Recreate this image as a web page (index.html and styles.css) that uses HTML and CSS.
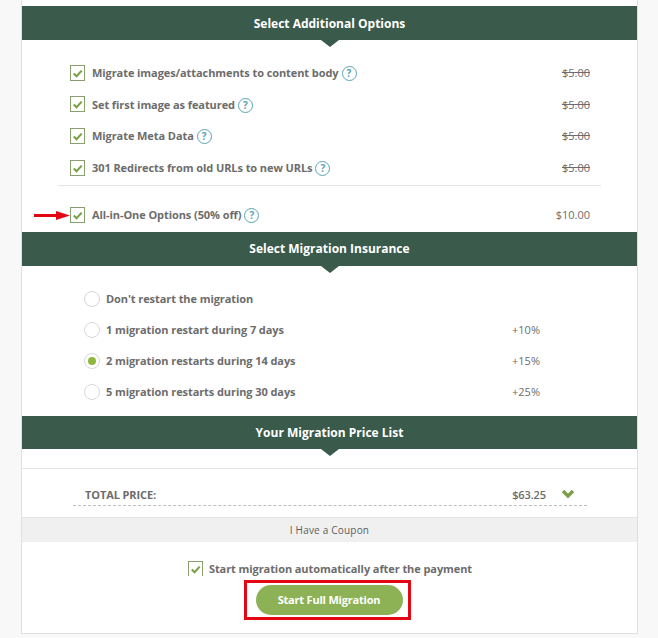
FILE: index.html
```html
<!DOCTYPE html>
<html lang="en">
<head>
<meta charset="utf-8">
<title>Migration options</title>
<link rel="stylesheet" href="styles.css">
</head>
<body>
<main class="card">
  <h2 class="band band-first">Select Additional Options</h2>
  <section class="options">
    <div class="row"><span class="check"><svg viewBox="0 0 14 14"><path d="M3 7.5 6 10.5l5.5-6" /></svg></span><span class="label">Migrate images/attachments to content body</span><span class="help">?</span><s class="price">$5.00</s></div>
    <div class="row"><span class="check"><svg viewBox="0 0 14 14"><path d="M3 7.5 6 10.5l5.5-6" /></svg></span><span class="label">Set first image as featured</span><span class="help">?</span><s class="price">$5.00</s></div>
    <div class="row"><span class="check"><svg viewBox="0 0 14 14"><path d="M3 7.5 6 10.5l5.5-6" /></svg></span><span class="label">Migrate Meta Data</span><span class="help">?</span><s class="price">$5.00</s></div>
    <div class="row"><span class="check"><svg viewBox="0 0 14 14"><path d="M3 7.5 6 10.5l5.5-6" /></svg></span><span class="label">301 Redirects from old URLs to new URLs</span><span class="help">?</span><s class="price">$5.00</s></div>
    <div class="row row-all">
      <svg class="red-arrow" viewBox="0 0 36 9"><path d="M0 3h22V0l14 4.5L22 9V6H0z"/></svg>
      <span class="check"><svg viewBox="0 0 14 14"><path d="M3 7.5 6 10.5l5.5-6" /></svg></span><span class="label">All-in-One Options (50% off)</span><span class="help">?</span><span class="price">$10.00</span></div>
  </section>
  <h2 class="band">Select Migration Insurance</h2>
  <section class="insurance">
    <div class="radio-row"><span class="radio"></span><span class="label">Don't restart the migration</span></div>
    <div class="radio-row"><span class="radio"></span><span class="label">1 migration restart during 7 days</span><span class="pct">+10%</span></div>
    <div class="radio-row"><span class="radio radio-on"></span><span class="label">2 migration restarts during 14 days</span><span class="pct">+15%</span></div>
    <div class="radio-row"><span class="radio"></span><span class="label">5 migration restarts during 30 days</span><span class="pct">+25%</span></div>
  </section>
  <h2 class="band band-last">Your Migration Price List</h2>
  <section class="total-wrap">
    <div class="total"><span class="total-label">TOTAL PRICE:</span><span class="total-value">$63.25</span>
      <svg class="chev" viewBox="0 0 14 10"><path d="M2 2l5 5 5-5"/></svg></div>
  </section>
  <div class="coupon">I Have a Coupon</div>
  <div class="auto"><span class="check check-cut"><svg viewBox="0 0 14 14"><path d="M3 7.5 6 10.5l5.5-6" /></svg></span><span class="label">Start migration automatically after the payment</span></div>
  <div class="cta"><div class="cta-frame"><button class="btn">Start Full Migration</button></div></div>
</main>
</body>
</html>
```
FILE: styles.css
```css
* { box-sizing: border-box; }
html, body { margin: 0; height: 638px; overflow: hidden; }
body { background: #f8f8f8; font-family: "Open Sans", sans-serif; color: #6c6c6c; }
.card {
  width: 617px; height: 634px; margin-left: 21px;
  background: #fff; border: 1px solid #dfdfdf; border-top: 0;
  padding-top: 6px;
}
.band {
  position: relative; margin: 0; height: 34px;
  background: #3a5a4b; color: #fff;
  font-size: 12px; font-weight: 700; line-height: 34px; text-align: center;
}
.band-first { line-height: 36px; }
.band-last { height: 33px; line-height: 34px; }
.band::after {
  content: ""; position: absolute; left: 50%; top: 100%; margin-left: -9px;
  border-style: solid; border-width: 7px 9px 0; border-color: #3a5a4b transparent transparent;
}
.options { height: 192px; padding: 17px 36px 0; }
.row { display: flex; align-items: center; height: 31.6px; font-size: 11px; padding: 0 11px 0 12px; }
.row-all { position: relative; margin-top: 16px; height: 31px; }
.row-all::before {
  content: ""; position: absolute; left: 0; right: 0; top: -14px; height: 1px; background: #e4e4e4;
}
.red-arrow { position: absolute; left: -24px; top: 12px; width: 36px; height: 9px; fill: #e30613; }
.check {
  flex: none; width: 15px; height: 16px; border: 1px solid #8a9f6e; background: #fff; display: block;
}
.check-cut { border-bottom: 0; }
.check svg { display: block; width: 13px; height: 14px; fill: none; stroke: #7a9f45; stroke-width: 2.2; }
.label { font-weight: 700; font-size: 11px; margin-left: 7px; white-space: nowrap; letter-spacing: -.08px; }
.help {
  flex: none; width: 15px; height: 15px; margin: 2px 0 0 3px; border-radius: 50%;
  border: 1px solid #5aa3b5; color: #5aa3b5; font-size: 10px; font-weight: 700; line-height: 12px; text-align: center;
}
.price { margin-left: auto; font-size: 11px; }
.insurance { height: 150px; padding: 17px 62px 0; }
.radio-row { display: flex; align-items: center; height: 31px; padding-right: 35px; }
.radio { flex: none; width: 16px; height: 16px; border-radius: 50%; border: 1px solid #d8d8d8; background: #fff; position: relative; }
.radio-on::after { content: ""; position: absolute; left: 3px; top: 3px; width: 8px; height: 8px; border-radius: 50%; background: #8fb63f; }
.radio-row .label { margin-left: 6px; }
.pct { margin-left: auto; font-size: 11px; }
.total-wrap { height: 49px; margin-top: 19px; border-top: 1px solid #e4e4e4; padding: 14px 50px 0 51px; }
.total { display: flex; align-items: center; height: 23px; padding: 0 12px; border-bottom: 1px dashed #bdbdbd; font-size: 11px; font-weight: 700; letter-spacing: -.1px; }
.total-value { margin-left: auto; font-weight: 600; }
.chev { width: 14px; height: 10px; margin-left: 15px; fill: none; stroke: #7c9f4a; stroke-width: 3.4; }
.coupon { height: 25px; background: #f0f0f0; border-top: 1px solid #e4e4e4; color: #5c5c5c; font-size: 10px; line-height: 25px; text-align: center; letter-spacing: .02em; }
.auto { display: flex; justify-content: center; align-items: center; margin-top: 19px; height: 15px; padding-left: 1px; }
.auto .check { height: 15px; }
.auto .label { margin-left: 6px; }
.cta { display: flex; justify-content: center; margin-top: 4px; }
.cta-frame { border: 3px solid #e30613; padding: 2px 8px 2px 9px; height: 40px; width: 167px; margin-left: -5px; }
.btn {
  display: block; width: 147px; height: 30px; border: 0; border-radius: 15px;
  background: #8db255; color: #fff; font: 700 11px/28px "Open Sans", sans-serif; letter-spacing: -.2px; padding: 0;
}
```
